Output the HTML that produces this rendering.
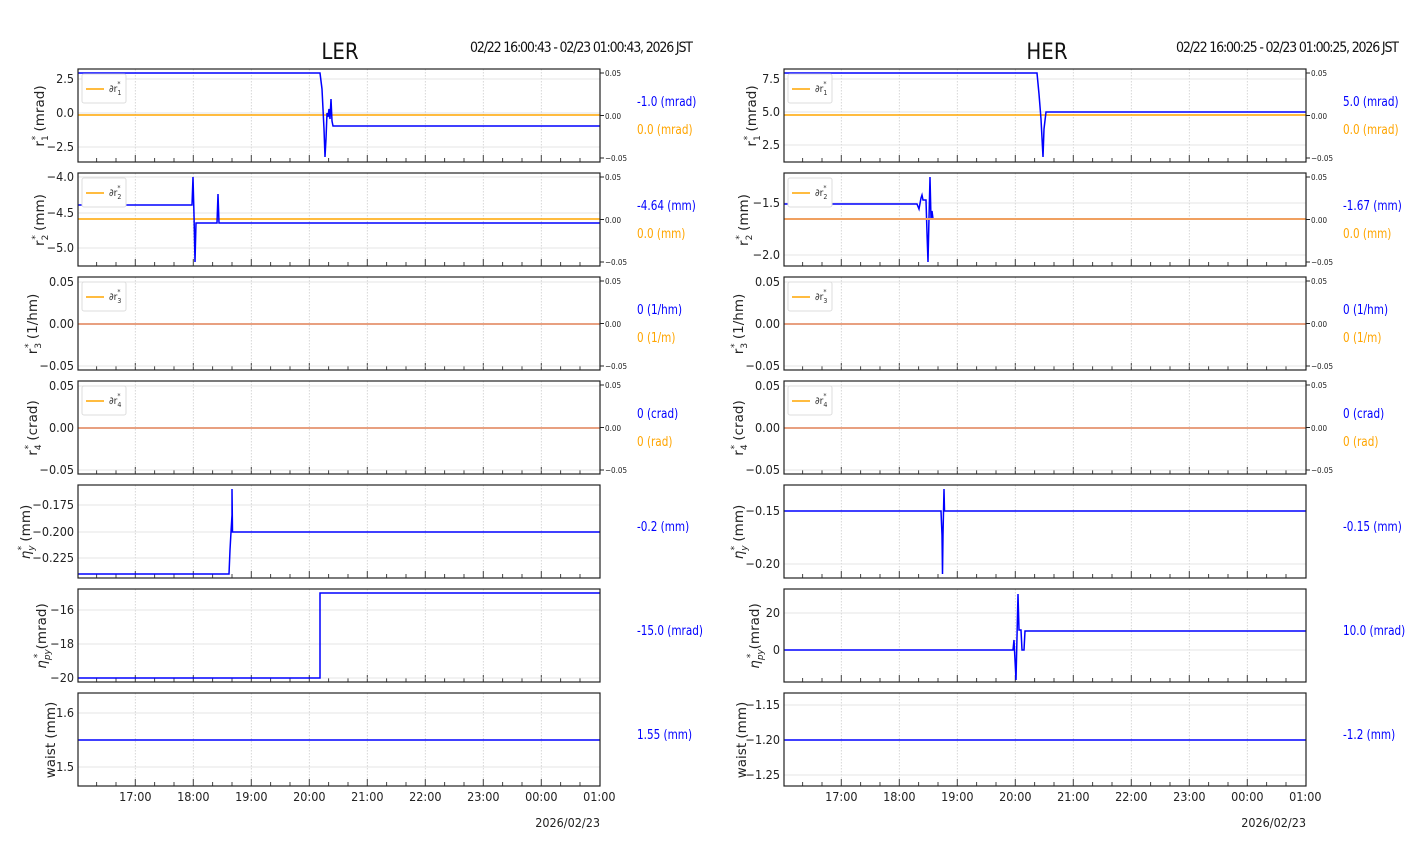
<!DOCTYPE html>
<html><head><meta charset="utf-8"><style>
html,body{margin:0;padding:0;background:#fff;}
svg{display:block;font-family:"DejaVu Sans Condensed","Liberation Sans Narrow","Liberation Sans",sans-serif;}
.tl{font-size:12.5px;fill:#222;}
.sm{font-size:8px;fill:#222;}
.yl{font-size:13.5px;fill:#222;font-family:"DejaVu Sans",sans-serif;}
</style></head><body>
<svg width="1412" height="864" viewBox="0 0 1412 864" xmlns="http://www.w3.org/2000/svg">
<defs>
<g id="fr">
<path d="M57.3 0V93M115.3 0V93M173.3 0V93M231.3 0V93M289.3 0V93M347.3 0V93M405.3 0V93M463.3 0V93" stroke="#ccc" stroke-width="0.8" stroke-dasharray="1.5,1.5"/>
<path d="M18.6 93v-4M38 93v-4M76.6 93v-4M96 93v-4M134.6 93v-4M154 93v-4M192.6 93v-4M212 93v-4M250.6 93v-4M270 93v-4M308.6 93v-4M328 93v-4M366.6 93v-4M386 93v-4M424.6 93v-4M444 93v-4M482.6 93v-4M502 93v-4M57.3 93v-7M115.3 93v-7M173.3 93v-7M231.3 93v-7M289.3 93v-7M347.3 93v-7M405.3 93v-7M463.3 93v-7" stroke="#444" stroke-width="1"/>
</g>
<g id="box"><rect x="0" y="0" width="522" height="93" fill="none" stroke="#222" stroke-width="1.2"/></g>
<g id="rax">
<path d="M522 4h4M522 46.5h4M522 89h4" stroke="#222"/>
<text class="sm" x="527" y="7">0.05</text><text class="sm" x="527" y="50">0.00</text><text class="sm" x="527" y="92">−0.05</text>
</g>
<g id="leg"><rect x="4" y="5" width="44" height="29" rx="2" fill="#fff" stroke="#ddd"/><path d="M8 20H26" stroke="#ffa500" stroke-width="1.5"/></g>
<g id="xl">
<text class="tl" x="57.3" y="15" text-anchor="middle">17:00</text><text class="tl" x="115.3" y="15" text-anchor="middle">18:00</text><text class="tl" x="173.3" y="15" text-anchor="middle">19:00</text><text class="tl" x="231.3" y="15" text-anchor="middle">20:00</text><text class="tl" x="289.3" y="15" text-anchor="middle">21:00</text><text class="tl" x="347.3" y="15" text-anchor="middle">22:00</text><text class="tl" x="405.3" y="15" text-anchor="middle">23:00</text><text class="tl" x="463.3" y="15" text-anchor="middle">00:00</text><text class="tl" x="521.3" y="15" text-anchor="middle">01:00</text>
</g>
</defs>

<text x="340" y="59" font-size="22" text-anchor="middle" fill="#111">LER</text>
<text x="470" y="52" font-size="14" fill="#111" textLength="223">02/22 16:00:43 - 02/23 01:00:43, 2026 JST</text>
<text x="1047" y="59" font-size="22" text-anchor="middle" fill="#111">HER</text>
<text x="1176" y="52" font-size="14" fill="#111" textLength="223">02/22 16:00:25 - 02/23 01:00:25, 2026 JST</text>

<!-- ===== LEFT ===== -->
<g transform="translate(78,69)"><use href="#fr"/>
<path d="M0 10h522M0 44h522M0 78h522" stroke="#ddd" stroke-width="0.8"/>
<path d="M0 46h522" stroke="#ffa500" stroke-width="1.5"/>
<path d="M0 4H242L244 20L245 40L246 60L247 88L248 70L249 44L250 48L251 40L252 50L253 30L254 52L255 57H522" fill="none" stroke="#00f" stroke-width="1.5"/>
<use href="#leg"/><text x="31" y="23" font-size="10" fill="#333">∂r<tspan font-size="7" dy="3">1</tspan><tspan font-size="7" dx="-4" dy="-9">*</tspan></text>
<use href="#rax"/><use href="#box"/></g>
<text class="tl" x="74" y="83" text-anchor="end">2.5</text><text class="tl" x="74" y="117" text-anchor="end">0.0</text><text class="tl" x="74" y="151" text-anchor="end">−2.5</text>

<g transform="translate(78,173)"><use href="#fr"/>
<path d="M0 4h522M0 40h522M0 75h522" stroke="#ddd" stroke-width="0.8"/>
<path d="M0 46h522" stroke="#ffa500" stroke-width="1.5"/>
<path d="M0 32H114L115 4L116 42L117 89L118 50H139L140 21L141 50H522" fill="none" stroke="#00f" stroke-width="1.5"/>
<use href="#leg"/><text x="31" y="23" font-size="10" fill="#333">∂r<tspan font-size="7" dy="3">2</tspan><tspan font-size="7" dx="-4" dy="-9">*</tspan></text>
<use href="#rax"/><use href="#box"/></g>
<text class="tl" x="74" y="181" text-anchor="end">−4.0</text><text class="tl" x="74" y="217" text-anchor="end">−4.5</text><text class="tl" x="74" y="252" text-anchor="end">−5.0</text>

<g transform="translate(78,277)"><use href="#fr"/>
<path d="M0 5h522M0 89h522" stroke="#ddd" stroke-width="0.8"/>
<path d="M0 47h522" stroke="#e8a080" stroke-width="2"/>
<use href="#leg"/><text x="31" y="23" font-size="10" fill="#333">∂r<tspan font-size="7" dy="3">3</tspan><tspan font-size="7" dx="-4" dy="-9">*</tspan></text>
<use href="#rax"/><use href="#box"/></g>
<text class="tl" x="74" y="286" text-anchor="end">0.05</text><text class="tl" x="74" y="328" text-anchor="end">0.00</text><text class="tl" x="74" y="370" text-anchor="end">−0.05</text>

<g transform="translate(78,381)"><use href="#fr"/>
<path d="M0 5h522M0 89h522" stroke="#ddd" stroke-width="0.8"/>
<path d="M0 47h522" stroke="#e8a080" stroke-width="2"/>
<use href="#leg"/><text x="31" y="23" font-size="10" fill="#333">∂r<tspan font-size="7" dy="3">4</tspan><tspan font-size="7" dx="-4" dy="-9">*</tspan></text>
<use href="#rax"/><use href="#box"/></g>
<text class="tl" x="74" y="390" text-anchor="end">0.05</text><text class="tl" x="74" y="432" text-anchor="end">0.00</text><text class="tl" x="74" y="474" text-anchor="end">−0.05</text>

<g transform="translate(78,485)"><use href="#fr"/>
<path d="M0 20h522M0 47h522M0 73h522" stroke="#ddd" stroke-width="0.8"/>
<path d="M0 89H151L152 65L153 47L154 30L154 4L154.5 47H522" fill="none" stroke="#00f" stroke-width="1.5"/>
<use href="#box"/></g>
<text class="tl" x="74" y="509" text-anchor="end">−0.175</text><text class="tl" x="74" y="536" text-anchor="end">−0.200</text><text class="tl" x="74" y="562" text-anchor="end">−0.225</text>

<g transform="translate(78,589)"><use href="#fr"/>
<path d="M0 21h522M0 55h522M0 89h522" stroke="#ddd" stroke-width="0.8"/>
<path d="M0 89H242V4H522" fill="none" stroke="#00f" stroke-width="1.5"/>
<use href="#box"/></g>
<text class="tl" x="74" y="614" text-anchor="end">−16</text><text class="tl" x="74" y="648" text-anchor="end">−18</text><text class="tl" x="74" y="682" text-anchor="end">−20</text>

<g transform="translate(78,693)"><use href="#fr"/>
<path d="M0 20h522M0 74h522" stroke="#ddd" stroke-width="0.8"/>
<path d="M0 47h522" stroke="#00f" stroke-width="1.5"/>
<use href="#box"/></g>
<text class="tl" x="74" y="717" text-anchor="end">1.6</text><text class="tl" x="74" y="771" text-anchor="end">1.5</text>
<g transform="translate(78,786)"><use href="#xl"/></g>
<text class="tl" x="600" y="827" text-anchor="end">2026/02/23</text>

<text class="yl" transform="translate(44,116) rotate(-90)" text-anchor="middle">r<tspan font-size="9" dy="4">1</tspan><tspan font-size="9" dx="-5" dy="-10">*</tspan><tspan dy="6">  (mrad)</tspan></text>
<text class="yl" transform="translate(44,220) rotate(-90)" text-anchor="middle">r<tspan font-size="9" dy="4">2</tspan><tspan font-size="9" dx="-5" dy="-10">*</tspan><tspan dy="6">  (mm)</tspan></text>
<text class="yl" transform="translate(37,324) rotate(-90)" text-anchor="middle">r<tspan font-size="9" dy="4">3</tspan><tspan font-size="9" dx="-5" dy="-10">*</tspan><tspan dy="6">  (1/hm)</tspan></text>
<text class="yl" transform="translate(37,428) rotate(-90)" text-anchor="middle">r<tspan font-size="9" dy="4">4</tspan><tspan font-size="9" dx="-5" dy="-10">*</tspan><tspan dy="6">  (crad)</tspan></text>
<text class="yl" transform="translate(30,532) rotate(-90)" text-anchor="middle"><tspan font-style="italic">η</tspan><tspan font-size="9" dy="4" font-style="italic">y</tspan><tspan font-size="9" dx="-5" dy="-10">*</tspan><tspan dy="6">  (mm)</tspan></text>
<text class="yl" transform="translate(46,636) rotate(-90)" text-anchor="middle"><tspan font-style="italic">η</tspan><tspan font-size="9" dy="4" font-style="italic">py</tspan><tspan font-size="9" dx="-9" dy="-10">*</tspan><tspan dy="6">  (mrad)</tspan></text>
<text class="yl" transform="translate(55,740) rotate(-90)" text-anchor="middle">waist (mm)</text>

<g font-size="13.5" transform="translate(637,0) scale(0.86,1)">
<text x="0" y="106" fill="#00f">-1.0 (mrad)</text><text x="0" y="134" fill="#ffa500">0.0 (mrad)</text>
<text x="0" y="210" fill="#00f">-4.64 (mm)</text><text x="0" y="238" fill="#ffa500">0.0 (mm)</text>
<text x="0" y="314" fill="#00f">0 (1/hm)</text><text x="0" y="342" fill="#ffa500">0 (1/m)</text>
<text x="0" y="418" fill="#00f">0 (crad)</text><text x="0" y="446" fill="#ffa500">0 (rad)</text>
<text x="0" y="531" fill="#00f">-0.2 (mm)</text>
<text x="0" y="635" fill="#00f">-15.0 (mrad)</text>
<text x="0" y="739" fill="#00f">1.55 (mm)</text>
</g>

<!-- ===== RIGHT ===== -->
<g transform="translate(784,69)"><use href="#fr"/>
<path d="M0 10h522M0 43h522M0 76h522" stroke="#ddd" stroke-width="0.8"/>
<path d="M0 46h522" stroke="#ffa500" stroke-width="1.5"/>
<path d="M0 4H253L255 25L257 50L259 88L260 60L262 43H522" fill="none" stroke="#00f" stroke-width="1.5"/>
<use href="#leg"/><text x="31" y="23" font-size="10" fill="#333">∂r<tspan font-size="7" dy="3">1</tspan><tspan font-size="7" dx="-4" dy="-9">*</tspan></text>
<use href="#rax"/><use href="#box"/></g>
<text class="tl" x="780" y="83" text-anchor="end">7.5</text><text class="tl" x="780" y="116" text-anchor="end">5.0</text><text class="tl" x="780" y="149" text-anchor="end">2.5</text>

<g transform="translate(784,173)"><use href="#fr"/>
<path d="M0 30h522M0 82h522" stroke="#ddd" stroke-width="0.8"/>
<path d="M0 31H133L135 36L137 25L138 22L139 27H142L143 60L144 89L145 45L146 4L147 46L148 38L149 46" fill="none" stroke="#00f" stroke-width="1.5"/>
<path d="M0 46h522" stroke="#f0a060" stroke-width="2"/>
<use href="#leg"/><text x="31" y="23" font-size="10" fill="#333">∂r<tspan font-size="7" dy="3">2</tspan><tspan font-size="7" dx="-4" dy="-9">*</tspan></text>
<use href="#rax"/><use href="#box"/></g>
<text class="tl" x="780" y="207" text-anchor="end">−1.5</text><text class="tl" x="780" y="259" text-anchor="end">−2.0</text>

<g transform="translate(784,277)"><use href="#fr"/>
<path d="M0 5h522M0 89h522" stroke="#ddd" stroke-width="0.8"/>
<path d="M0 47h522" stroke="#e8a080" stroke-width="2"/>
<use href="#leg"/><text x="31" y="23" font-size="10" fill="#333">∂r<tspan font-size="7" dy="3">3</tspan><tspan font-size="7" dx="-4" dy="-9">*</tspan></text>
<use href="#rax"/><use href="#box"/></g>
<text class="tl" x="780" y="286" text-anchor="end">0.05</text><text class="tl" x="780" y="328" text-anchor="end">0.00</text><text class="tl" x="780" y="370" text-anchor="end">−0.05</text>

<g transform="translate(784,381)"><use href="#fr"/>
<path d="M0 5h522M0 89h522" stroke="#ddd" stroke-width="0.8"/>
<path d="M0 47h522" stroke="#e8a080" stroke-width="2"/>
<use href="#leg"/><text x="31" y="23" font-size="10" fill="#333">∂r<tspan font-size="7" dy="3">4</tspan><tspan font-size="7" dx="-4" dy="-9">*</tspan></text>
<use href="#rax"/><use href="#box"/></g>
<text class="tl" x="780" y="390" text-anchor="end">0.05</text><text class="tl" x="780" y="432" text-anchor="end">0.00</text><text class="tl" x="780" y="474" text-anchor="end">−0.05</text>

<g transform="translate(784,485)"><use href="#fr"/>
<path d="M0 26h522M0 79h522" stroke="#ddd" stroke-width="0.8"/>
<path d="M0 26H157L158 50L158.5 89L159 50L160 4L160.5 26H522" fill="none" stroke="#00f" stroke-width="1.5"/>
<use href="#box"/></g>
<text class="tl" x="780" y="515" text-anchor="end">−0.15</text><text class="tl" x="780" y="568" text-anchor="end">−0.20</text>

<g transform="translate(784,589)"><use href="#fr"/>
<path d="M0 24h522M0 61h522" stroke="#ddd" stroke-width="0.8"/>
<path d="M0 61H229L230 51L231 71L232 91L234 5L235 41H237L238 61H240L241 42H522" fill="none" stroke="#00f" stroke-width="1.5"/>
<use href="#box"/></g>
<text class="tl" x="780" y="617" text-anchor="end">20</text><text class="tl" x="780" y="654" text-anchor="end">0</text>

<g transform="translate(784,693)"><use href="#fr"/>
<path d="M0 12h522M0 47h522M0 82h522" stroke="#ddd" stroke-width="0.8"/>
<path d="M0 47h522" stroke="#00f" stroke-width="1.5"/>
<use href="#box"/></g>
<text class="tl" x="780" y="709" text-anchor="end">−1.15</text><text class="tl" x="780" y="744" text-anchor="end">−1.20</text><text class="tl" x="780" y="779" text-anchor="end">−1.25</text>
<g transform="translate(784,786)"><use href="#xl"/></g>
<text class="tl" x="1306" y="827" text-anchor="end">2026/02/23</text>

<text class="yl" transform="translate(756,116) rotate(-90)" text-anchor="middle">r<tspan font-size="9" dy="4">1</tspan><tspan font-size="9" dx="-5" dy="-10">*</tspan><tspan dy="6">  (mrad)</tspan></text>
<text class="yl" transform="translate(748,220) rotate(-90)" text-anchor="middle">r<tspan font-size="9" dy="4">2</tspan><tspan font-size="9" dx="-5" dy="-10">*</tspan><tspan dy="6">  (mm)</tspan></text>
<text class="yl" transform="translate(743,324) rotate(-90)" text-anchor="middle">r<tspan font-size="9" dy="4">3</tspan><tspan font-size="9" dx="-5" dy="-10">*</tspan><tspan dy="6">  (1/hm)</tspan></text>
<text class="yl" transform="translate(743,428) rotate(-90)" text-anchor="middle">r<tspan font-size="9" dy="4">4</tspan><tspan font-size="9" dx="-5" dy="-10">*</tspan><tspan dy="6">  (crad)</tspan></text>
<text class="yl" transform="translate(743,532) rotate(-90)" text-anchor="middle"><tspan font-style="italic">η</tspan><tspan font-size="9" dy="4" font-style="italic">y</tspan><tspan font-size="9" dx="-5" dy="-10">*</tspan><tspan dy="6">  (mm)</tspan></text>
<text class="yl" transform="translate(759,636) rotate(-90)" text-anchor="middle"><tspan font-style="italic">η</tspan><tspan font-size="9" dy="4" font-style="italic">py</tspan><tspan font-size="9" dx="-9" dy="-10">*</tspan><tspan dy="6">  (mrad)</tspan></text>
<text class="yl" transform="translate(746,740) rotate(-90)" text-anchor="middle">waist (mm)</text>

<g font-size="13.5" transform="translate(1343,0) scale(0.86,1)">
<text x="0" y="106" fill="#00f">5.0 (mrad)</text><text x="0" y="134" fill="#ffa500">0.0 (mrad)</text>
<text x="0" y="210" fill="#00f">-1.67 (mm)</text><text x="0" y="238" fill="#ffa500">0.0 (mm)</text>
<text x="0" y="314" fill="#00f">0 (1/hm)</text><text x="0" y="342" fill="#ffa500">0 (1/m)</text>
<text x="0" y="418" fill="#00f">0 (crad)</text><text x="0" y="446" fill="#ffa500">0 (rad)</text>
<text x="0" y="531" fill="#00f">-0.15 (mm)</text>
<text x="0" y="635" fill="#00f">10.0 (mrad)</text>
<text x="0" y="739" fill="#00f">-1.2 (mm)</text>
</g>
</svg>
</body></html>
